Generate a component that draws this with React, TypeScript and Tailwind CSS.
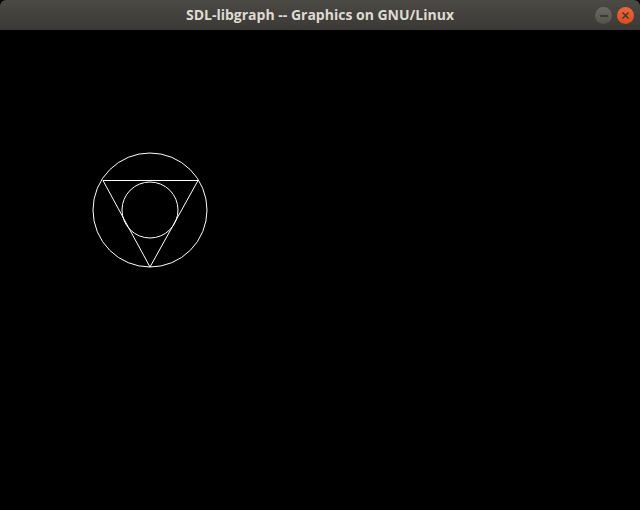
import React from "react";

export default function App() {
  return (
    <div className="w-[640px] h-[510px] flex flex-col bg-black overflow-hidden">
      <div className="relative h-[30px] flex items-center justify-center bg-gradient-to-b from-[#4b4a45] to-[#3a3935] rounded-t-[6px] shrink-0">
        <span
          className="text-[14px] font-bold text-[#dfdbd2] leading-none"
          style={{ fontFamily: '"Open Sans", "Noto Sans", sans-serif' }}
        >
          SDL-libgraph -- Graphics on GNU/Linux
        </span>
        <div className="absolute right-[6px] top-[7px] flex gap-[5px]">
          <div className="w-[17px] h-[17px] rounded-full bg-gradient-to-b from-[#6a6964] to-[#53524d] flex items-center justify-center">
            <div className="w-[8px] h-[2px] bg-[#3c3b37]" />
          </div>
          <div className="w-[17px] h-[17px] rounded-full bg-gradient-to-b from-[#f0673a] to-[#df4a16] flex items-center justify-center">
            <svg width="9" height="9" viewBox="0 0 9 9">
              <path d="M1.5 1.5 L7.5 7.5 M7.5 1.5 L1.5 7.5" stroke="#3c3b37" strokeWidth="1.5" />
            </svg>
          </div>
        </div>
      </div>
      <div className="flex-1 relative">
        <svg width="640" height="480" viewBox="0 30 640 480" className="block">
          <circle cx="150" cy="210" r="57" fill="none" stroke="#ffffff" strokeWidth="1" />
          <circle cx="150" cy="210" r="28" fill="none" stroke="#ffffff" strokeWidth="1" />
          <polygon points="103,180.5 198,180.5 150,267" fill="none" stroke="#ffffff" strokeWidth="1" />
        </svg>
      </div>
    </div>
  );
}
